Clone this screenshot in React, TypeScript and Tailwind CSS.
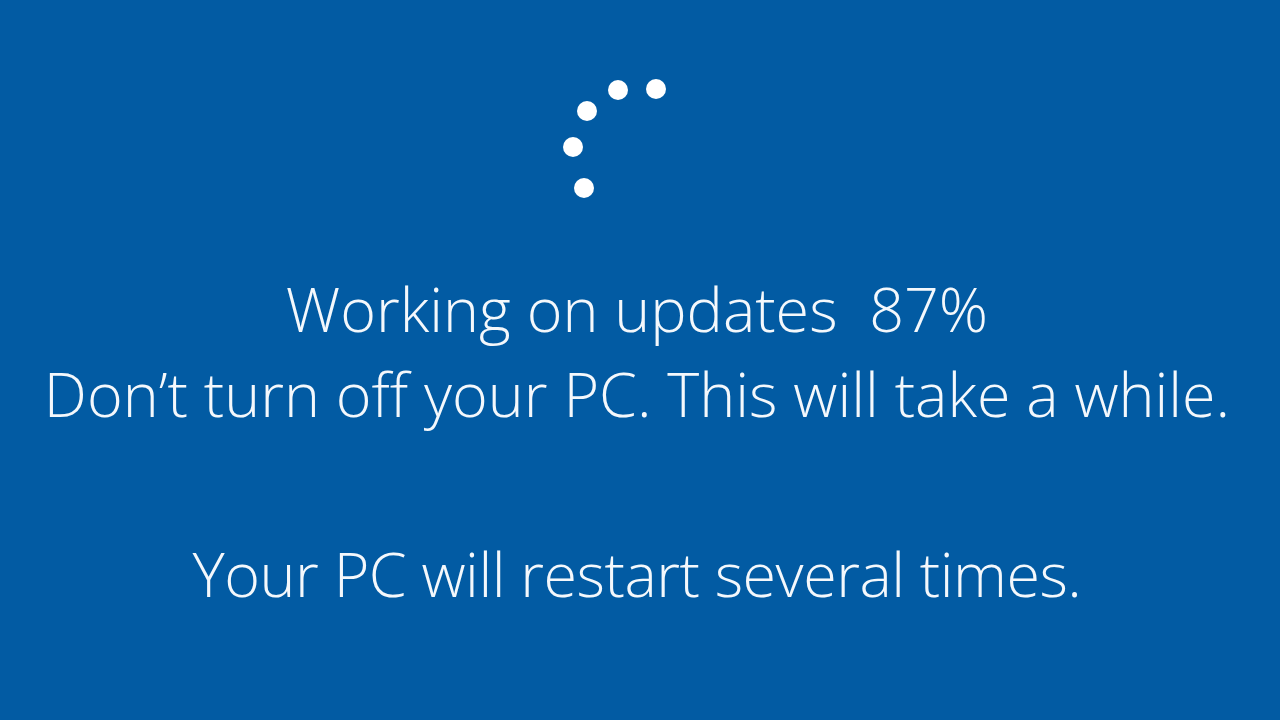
export default function App() {
  const dots = [
    [96, 21],
    [58, 22],
    [27, 43],
    [13, 79],
    [24, 120],
  ];

  return (
    <div className="w-[1280px] h-[720px] bg-[#025ba3] flex flex-col items-center overflow-hidden text-[#f4f8fc] font-['Open_Sans',sans-serif]">
      <svg width="160" height="160" viewBox="0 0 160 160" className="mt-[68px] shrink-0">
        {dots.map(([x, y], i) => (
          <circle key={i} cx={x} cy={y} r="10" fill="#ffffff" />
        ))}
      </svg>
      <div className="mt-[38px] pr-[6px] flex flex-col items-center text-[61px] font-light leading-[85px]">
        <div className="whitespace-pre">Working on updates  87%</div>
        <div>Don’t turn off your PC. This will take a while.</div>
        <div className="mt-[95px] tracking-[-0.5px]">Your PC will restart several times.</div>
      </div>
    </div>
  );
}
